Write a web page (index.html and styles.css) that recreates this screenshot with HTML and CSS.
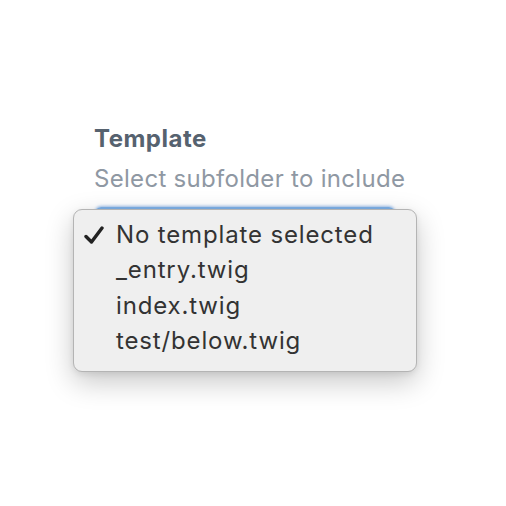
FILE: index.html
```html
<!DOCTYPE html>
<html lang="en">
<head>
<meta charset="utf-8">
<title>Template</title>
<link rel="stylesheet" href="styles.css">
</head>
<body>
<div class="field">
  <div class="label">Template</div>
  <div class="instructions">Select subfolder to include</div>
  <div class="select">
    <div class="menu">
      <div class="item selected">
        <svg class="check" width="20" height="18" viewBox="0 0 20 18"><path d="M2 10.5 L7.5 16 L18 2" fill="none" stroke="#222" stroke-width="3.4" stroke-linecap="round" stroke-linejoin="round"/></svg>
        No template selected
      </div>
      <div class="item">_entry.twig</div>
      <div class="item">index.twig</div>
      <div class="item">test/below.twig</div>
    </div>
  </div>
</div>
</body>
</html>
```
FILE: styles.css
```css
html, body {
  margin: 0;
  background: #ffffff;
}
body {
  min-height: 506px;
  font-family: Inter, "Liberation Sans", sans-serif;
}
.field {
  padding: 124px 0 0 94px;
}
.label {
  font-size: 24px;
  font-weight: 700;
  line-height: 30px;
  color: #56626f;
  letter-spacing: 0.5px;
}
.instructions {
  margin-top: 10px;
  font-size: 24px;
  line-height: 30px;
  color: #8f98a3;
  letter-spacing: 0.3px;
}
.select {
  position: relative;
  margin-top: 13px;
  margin-left: 1px;
  width: 300px;
  height: 34px;
  border-top: 2px solid #7fb2e8;
  border-radius: 6px;
  box-shadow: 0 -1px 3px rgba(90, 150, 225, 0.6);
}
.menu {
  position: absolute;
  left: -22px;
  top: 0;
  width: 342px;
  padding: 7px 0 12px;
  background: #efefef;
  border: 1px solid #b4b4b4;
  border-radius: 9px;
  box-shadow: 0 10px 28px rgba(0, 0, 0, 0.22), 0 2px 6px rgba(0, 0, 0, 0.08);
}
.item {
  position: relative;
  height: 35.4px;
  line-height: 35.4px;
  padding-left: 42px;
  font-size: 24px;
  color: #333333;
  white-space: nowrap;
  letter-spacing: 0.85px;
}
.check {
  position: absolute;
  left: 10px;
  top: 9px;
}
```
